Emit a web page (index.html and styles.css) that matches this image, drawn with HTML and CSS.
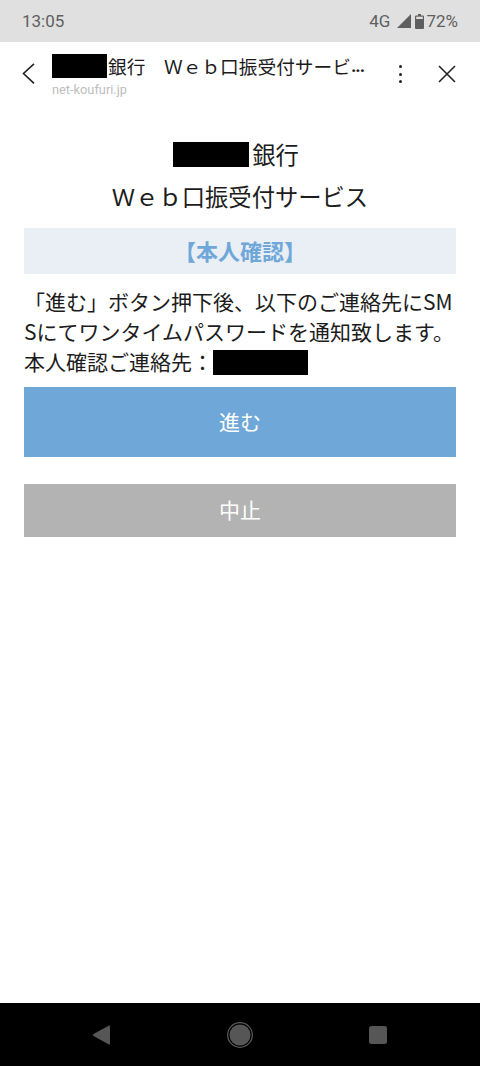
FILE: index.html
```html
<!DOCTYPE html>
<html lang="ja">
<head>
	<meta charset="utf-8">
	<title>Web口振受付サービス</title>
	<meta name="viewport" content="width=device-width, initial-scale=1">
	<link rel="stylesheet" href="styles.css">
</head>
<body>

<div class="statusbar">
	<span class="clock">13:05</span>
	<div class="status-right">
		<span class="network">4G</span>
		<svg class="signal" width="14" height="14" viewBox="0 0 14 14"><path d="M14 0V14H0Z" fill="#5f5f5f"/></svg>
		<svg class="battery" width="9" height="15" viewBox="0 0 9 15"><path d="M3 0H6V1.5H8A1 1 0 0 1 9 2.5V14A1 1 0 0 1 8 15H1A1 1 0 0 1 0 14V2.5A1 1 0 0 1 1 1.5H3Z" fill="#5f5f5f"/><rect x="1.2" y="2.7" width="6.6" height="2.3" fill="#e0e0e0"/></svg>
		<span class="percent">72%</span>
	</div>
</div>

<header class="appbar">
	<svg class="back" width="14" height="22" viewBox="0 0 14 22"><path d="M12 .8L1.5 10.5L12 20.3" fill="none" stroke="#222" stroke-width="1.6"/></svg>
	<div class="appbar-title">
		<div class="page-title"><span class="redact redact-title"></span>銀行　Ｗｅｂ口振受付サービ<span class="ellipsis">...</span></div>
		<div class="page-url">net-koufuri.jp</div>
	</div>
	<div class="dots"><i></i><i></i><i></i></div>
	<svg class="close" width="18" height="18" viewBox="0 0 18 18"><path d="M1 1L17 17M17 1L1 17" fill="none" stroke="#222" stroke-width="1.6"/></svg>
</header>

<main class="content">
	<h1 class="service-name">
		<div class="bank-line"><span class="redact redact-bank"></span>銀行</div>
		<div class="service-line">Ｗｅｂ口振受付サービス</div>
	</h1>
	<h2 class="section-head">【本人確認】</h2>
	<p class="message">
		「進む」ボタン押下後、以下のご連絡先にSMSにてワンタイムパスワードを通知致します。<br>
		本人確認ご連絡先：<span class="redact redact-phone"></span>
	</p>
	<button class="btn btn-next" type="button">進む</button>
	<button class="btn btn-stop" type="button">中止</button>
</main>

<nav class="navbar">
	<svg width="18" height="20" viewBox="0 0 18 20"><path d="M18 1.5V18.5Q18 20 16.5 19.3L1.5 11Q0 10 1.5 9L16.5 .7Q18 0 18 1.5Z" fill="#565656"/></svg>
	<svg width="26" height="26" viewBox="0 0 26 26"><circle cx="13" cy="13" r="12.3" fill="none" stroke="#5a5a5a" stroke-width="1.2"/><circle cx="13" cy="13" r="10.5" fill="#565656"/></svg>
	<svg width="18" height="18" viewBox="0 0 18 18"><rect width="18" height="18" rx="2.5" fill="#565656"/></svg>
</nav>

</body>
</html>
```

FILE: styles.css
```css
html, body {
	margin: 0;
	padding: 0;
}

body {
	width: 480px;
	height: 1066px;
	display: flex;
	flex-direction: column;
	background: #fff;
	color: #1c1c1c;
	font-family: "Noto Sans CJK JP", "Noto Sans", sans-serif;
	overflow: hidden;
}

.statusbar {
	height: 42px;
	flex: none;
	box-sizing: border-box;
	padding: 0 22px;
	display: flex;
	align-items: center;
	justify-content: space-between;
	background: #e0e0e0;
	color: #5f5f5f;
	font-family: Roboto, sans-serif;
	font-size: 17px;
}

.status-right {
	display: flex;
	align-items: center;
}

.signal {
	margin-left: 7px;
}

.battery {
	margin-left: 4px;
	margin-right: 2px;
}

.appbar {
	height: 68px;
	flex: none;
	box-sizing: border-box;
	padding: 0 24px 4px 22px;
	display: flex;
	align-items: center;
}

.appbar-title {
	width: 320px;
	margin-left: 16px;
	padding-top: 2px;
	flex: none;
}

.page-title {
	display: flex;
	align-items: center;
	height: 26px;
	font-size: 18.7px;
	white-space: nowrap;
}

.ellipsis {
	font-family: Roboto, sans-serif;
	font-weight: 700;
	letter-spacing: -1px;
}

.page-url {
	margin-top: 3px;
	color: #bdbdbd;
	font-family: Roboto, sans-serif;
	font-size: 12.8px;
	line-height: 16px;
}

.dots {
	margin-left: 26.5px;
	display: flex;
	flex-direction: column;
	gap: 4.3px;
}

.dots i {
	display: block;
	width: 3px;
	height: 3px;
	border-radius: 50%;
	background: #222;
}

.close {
	margin-left: 36.5px;
}

.redact {
	display: inline-block;
	background: #000;
}

.redact-title {
	width: 55px;
	height: 24px;
	margin-right: 1px;
}

.redact-bank {
	width: 76px;
	height: 25px;
	margin-right: 3px;
}

.redact-phone {
	width: 95px;
	height: 25px;
	vertical-align: -5px;
}

.content {
	flex: 1;
	padding: 23px 24px 0;
}

.service-name {
	margin: 0;
	font-size: 23.3px;
	font-weight: 400;
	text-align: center;
}

.bank-line {
	height: 42px;
	line-height: 42px;
	padding-right: 8px;
	display: flex;
	align-items: center;
	justify-content: center;
}

.service-line {
	height: 42px;
	line-height: 42px;
}

.section-head {
	margin: 11px 0 0;
	height: 46px;
	line-height: 45px;
	background: #e9eff4;
	color: #6fa8d8;
	font-size: 22px;
	font-weight: 700;
	text-align: center;
}

.message {
	margin: 0;
	padding-top: 12px;
	font-size: 21px;
	line-height: 30px;
	word-break: break-all;
}

.btn {
	display: block;
	width: 100%;
	border: 0;
	color: #fff;
	font-family: inherit;
	font-size: 21px;
	padding: 0 0 2px;
}

.btn-next {
	height: 70px;
	margin-top: 11px;
	background: #6fa8d8;
}

.btn-stop {
	height: 53px;
	margin-top: 27px;
	padding-bottom: 4px;
	background: #b3b3b3;
}

.navbar {
	height: 63px;
	flex: none;
	padding: 0 93px 0 92px;
	display: flex;
	align-items: center;
	justify-content: space-between;
	background: #000;
}
```
